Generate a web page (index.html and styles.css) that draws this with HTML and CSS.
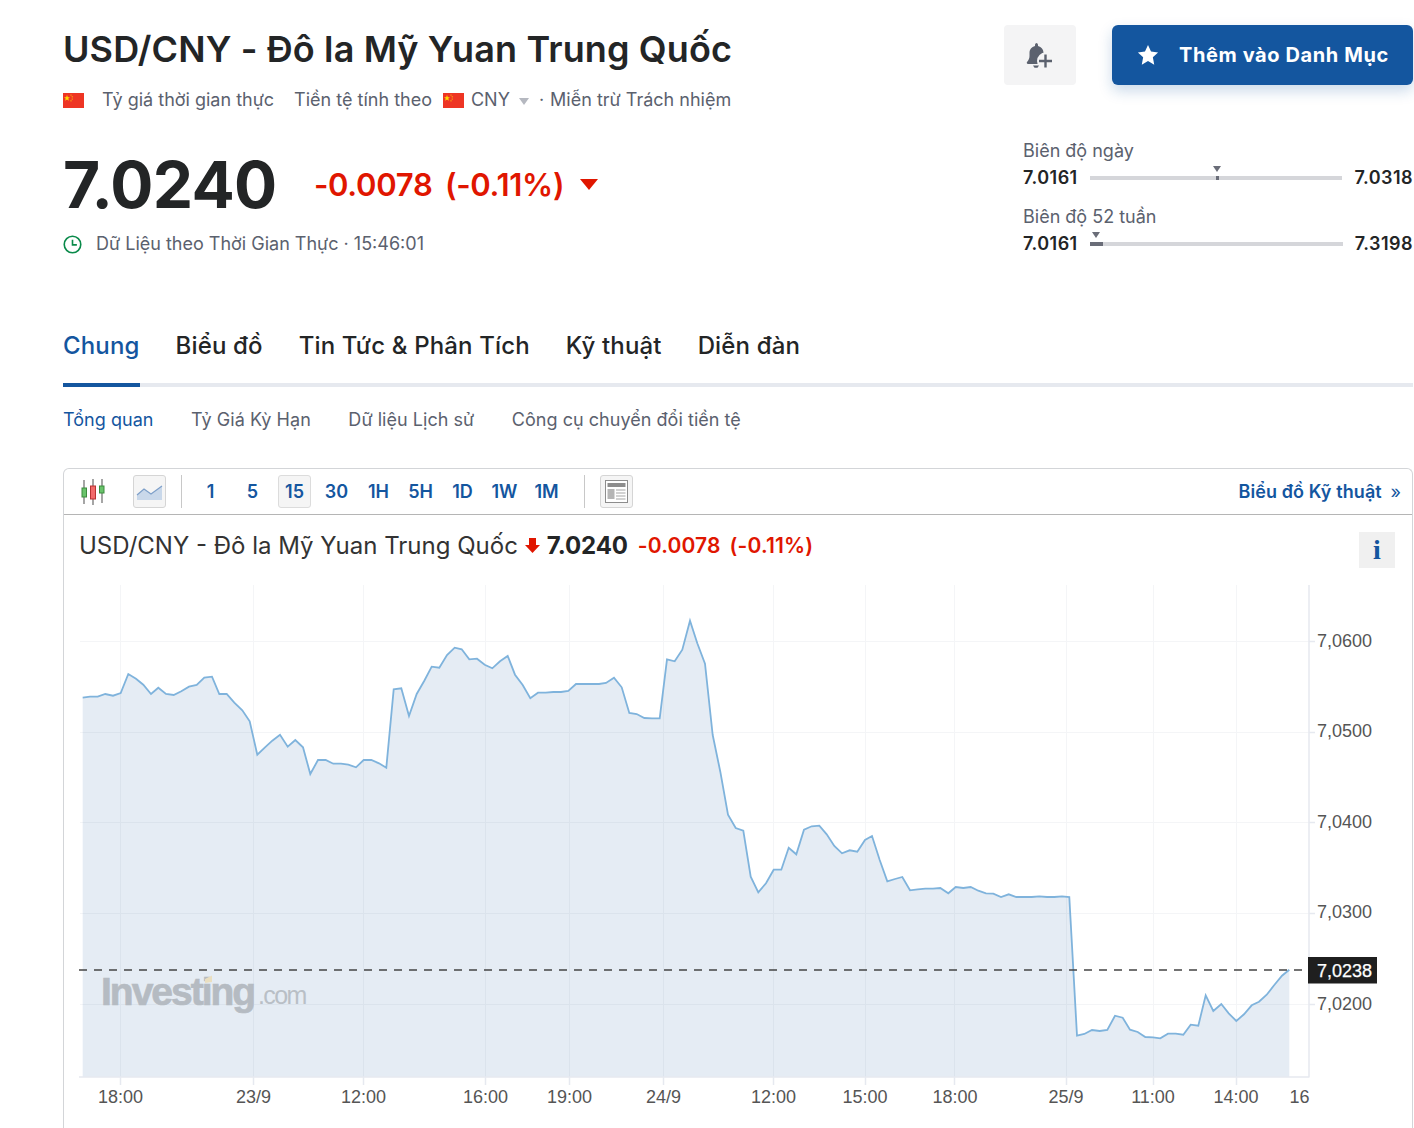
FILE: index.html
```html
<!DOCTYPE html>
<html lang="vi">
<head>
    <meta charset="UTF-8">
    <title>USD/CNY - Đô la Mỹ Yuan Trung Quốc</title>
    <link rel="stylesheet" href="styles.css">
</head>
<body>
<div class="page">
    <header class="top">
        <div class="summary">
            <h1 class="title">USD/CNY - Đô la Mỹ Yuan Trung Quốc</h1>
            <div class="meta">
                <svg class="flag" viewBox="0 0 21 15"><rect width="21" height="15" fill="#ee3524"/><polygon points="4,2 4.8,4.2 7,4.3 5.3,5.6 5.9,7.8 4,6.5 2.1,7.8 2.7,5.6 1,4.3 3.2,4.2" fill="#ffde00"/><circle cx="8" cy="2" r=".6" fill="#ffde00"/><circle cx="9.2" cy="3.8" r=".6" fill="#ffde00"/><circle cx="9.2" cy="6" r=".6" fill="#ffde00"/><circle cx="8" cy="7.8" r=".6" fill="#ffde00"/></svg>
                <span class="meta-rt">Tỷ giá thời gian thực</span>
                <span class="meta-cur">Tiền tệ tính theo</span>
                <svg class="flag flag-cny" viewBox="0 0 21 15"><rect width="21" height="15" fill="#ee3524"/><polygon points="4,2 4.8,4.2 7,4.3 5.3,5.6 5.9,7.8 4,6.5 2.1,7.8 2.7,5.6 1,4.3 3.2,4.2" fill="#ffde00"/><circle cx="8" cy="2" r=".6" fill="#ffde00"/><circle cx="9.2" cy="3.8" r=".6" fill="#ffde00"/><circle cx="9.2" cy="6" r=".6" fill="#ffde00"/><circle cx="8" cy="7.8" r=".6" fill="#ffde00"/></svg>
                <span>CNY</span>
                <span class="caret"></span>
                <span class="meta-dot">·</span>
                <span>Miễn trừ Trách nhiệm</span>
            </div>
            <div class="quote">
                <span class="last">7.0240</span>
                <span class="change">-0.0078</span>
                <span class="change change-pct">(-0.11%)</span>
                <span class="down"></span>
            </div>
            <div class="clock-row">
                <svg class="clock" viewBox="0 0 20 20"><circle cx="10" cy="10" r="8.7" fill="none" stroke="#0a8a4a" stroke-width="1.7"/><path d="M10 5v5.4h4.6" fill="none" stroke="#0a8a4a" stroke-width="1.7"/></svg>
                <span>Dữ Liệu theo Thời Gian Thực · 15:46:01</span>
            </div>
        </div>
        <div class="side">
            <div class="actions">
                <button class="bell-btn">
                    <svg width="28" height="28" viewBox="0 0 28 28"><path d="M10 2c1.200 0 2 .8 2 2v1c3.400.8 5.500 3.500 5.500 7v3c0 2.600 1 4.300 2.500 6 .6.800 0 2-1 2H2c-1 0-1.600-1.200-1-2 1.500-1.700 2.500-3.400 2.500-6v-3c0-3.500 2.100-6.200 5.500-7V4c0-1.200.8-2 2-2z" fill="#5b616e"/><circle cx="19.500" cy="20" r="8.500" fill="#f4f4f5"/><path d="M7 24.500h6l-1.500 2.200h-3z" fill="#5b616e"/><path d="M19.500 13.500v13M13 20h13" stroke="#5b616e" stroke-width="2.400" fill="none"/></svg>
                </button>
                <button class="watch-btn">
                    <svg class="star" viewBox="0 0 24 24"><polygon points="12,1 15.300,8.300 23,9.200 17.300,14.500 18.800,22.500 12,18.500 5.200,22.500 6.700,14.500 1,9.200 8.700,8.300" fill="#fff"/></svg>
                    <span>Thêm vào Danh Mục</span>
                </button>
            </div>
            <div class="ranges">
                <div class="range">
                    <div class="range-label">Biên độ ngày</div>
                    <div class="range-row">
                        <b>7.0161</b>
                        <div class="track"><i class="tick" style="left: 50.3%"></i><i class="pointer" style="left: 50.3%"></i></div>
                        <b>7.0318</b>
                    </div>
                </div>
                <div class="range">
                    <div class="range-label">Biên độ 52 tuần</div>
                    <div class="range-row">
                        <b>7.0161</b>
                        <div class="track"><i class="fill" style="width: 5.100%"></i><i class="pointer" style="left: 2.500%"></i></div>
                        <b>7.3198</b>
                    </div>
                </div>
            </div>
        </div>
    </header>

    <nav class="tabs">
        <a class="tab active">Chung</a>
        <a class="tab">Biểu đồ</a>
        <a class="tab">Tin Tức &amp; Phân Tích</a>
        <a class="tab">Kỹ thuật</a>
        <a class="tab">Diễn đàn</a>
    </nav>
    <nav class="subtabs">
        <a class="active">Tổng quan</a>
        <a>Tỷ Giá Kỳ Hạn</a>
        <a>Dữ liệu Lịch sử</a>
        <a>Công cụ chuyển đổi tiền tệ</a>
    </nav>

    <section class="card">
        <div class="toolbar">
            <svg class="candles" viewBox="0 0 25 26">
                <path d="M3 1v24M12 0v26M21 0v24" stroke="#6b6b6b" stroke-width="1.200"/>
                <rect x="1" y="9" width="4.500" height="9" fill="#69c36b" stroke="#3c8b3e"/>
                <rect x="9.500" y="7" width="5" height="13" fill="#f26a6a" stroke="#b83232"/>
                <rect x="18.500" y="7" width="4.500" height="7" fill="#69c36b" stroke="#3c8b3e"/>
            </svg>
            <button class="tool-box area-box">
                <svg width="27" height="20" viewBox="0 0 27 20"><path d="M1 13l7-6 7 5 11-8v14H1z" fill="#c9d8ea"/><path d="M1 13l7-6 7 5 11-8" fill="none" stroke="#7d9fc9" stroke-width="1.200"/></svg>
            </button>
            <span class="sep sep-first"></span>
            <div class="periods">
                <a>1</a><a>5</a><a class="on">15</a><a>30</a><a>1H</a><a>5H</a><a>1D</a><a>1W</a><a>1M</a>
            </div>
            <span class="sep sep-second"></span>
            <button class="tool-box">
                <svg width="23" height="23" viewBox="0 0 23 23"><rect x=".5" y=".5" width="22" height="22" fill="#fff" stroke="#8d8d8d"/><rect x="2.500" y="3" width="18" height="4" fill="#8d8d8d"/><rect x="2.500" y="9" width="7" height="10" fill="#b5b5b5"/><path d="M11 10h9.500M11 13h9.500M11 16h9.500M11 19h9.500" stroke="#a5a5a5" stroke-width="1.200"/></svg>
            </button>
            <a class="tech-link">Biểu đồ Kỹ thuật <span class="chev">»</span></a>
        </div>
        <div class="chart-head">
            <span class="chart-name">USD/CNY - Đô la Mỹ Yuan Trung Quốc</span>
            <svg class="chart-arrow" viewBox="0 0 15 15"><path d="M4 0h7v7h4l-7.500 8L0 7h4z" fill="#e01600"/></svg>
            <span class="chart-last">7.0240</span>
            <span class="chart-change">-0.0078</span>
            <span class="chart-change chart-pct">(-0.11%)</span>
            <span class="info">i</span>
        </div>
        <svg class="chart" viewBox="64 580 1348 548" width="1348" height="548">
            <g class="grid">
                <path d="M80 641.500H1309M80 732.500H1309M80 822.500H1309M80 913.500H1309M80 1004.500H1309"/>
                <path d="M120.500 585V1077M253.500 585V1077M363.500 585V1077M485.500 585V1077M569.500 585V1077M663.500 585V1077M773.500 585V1077M865.500 585V1077M954.500 585V1077M1066.500 585V1077M1153.500 585V1077M1236.500 585V1077"/>
            </g>
            <polygon class="area" points="82.700,1077 82.700,697.700 90,696.700 97.700,696.700 105.300,694 113,695.700 120.700,693 128.300,674 136,678.700 143.300,684.700 151,694 158.300,687.700 166,694 173.700,695 181.300,691.300 189,686.700 196.700,685 204.300,677.700 212,676.700 219.300,694 226.700,694 234.300,702.700 242.300,710.300 249.700,721.300 257.300,754.700 265,747.300 272.300,740.700 280,734.700 287.700,746.700 295.300,740 303,747.300 310.300,774 318,760 325.700,760 333.300,763.700 341,763.700 348.300,764.700 356,767.300 363.700,760 371.300,760 379,763.300 386.300,767.700 393.700,689.300 401.300,688.300 409,716 416.700,694 424.300,680.700 431.700,666.700 439.300,667.700 447,655 454.700,647.700 461.700,649.300 469.300,659.300 477,658.700 484.700,664.700 492.300,668.300 500,661.300 507.700,656 515,674.700 522.700,685 530.300,698.300 538,692.700 545.700,692.700 553.300,692 561,692 568.300,691 576,684 583.700,684 591.300,684 599,684 606,683 614,677.700 621.700,687.300 629.300,713 636.700,714 644.300,718 652,718.300 659.700,718.300 667,659.300 674.700,661.300 682.300,649.700 690,620.700 697.300,643.300 705,663.700 712.700,735 720.300,771.700 728,814.700 735.700,828 743.300,830.700 750.700,876.700 758.300,892.300 766,883.300 773.700,869.700 781.300,869.700 788.700,847.700 796.300,854.300 804,829.700 811.700,826.300 819.300,825.700 826.700,834.300 834.300,846 842,853.300 849.700,850.300 857.300,851.700 865,840 872,836 879.700,860 887.300,881.300 895,879 902.300,877 910,890.300 917.700,889.300 925.300,888.700 933,888.700 940.300,888 948.300,893.300 955.700,887 963.300,888 970.700,887 978.300,890.700 986,893.300 993.300,893.700 1001,897 1008.700,894.300 1016.300,897 1024,897 1031.700,897 1039.300,896.300 1047,897 1054.300,897 1062,896.300 1069.300,897 1077,1035.700 1084.300,1034 1092,1030 1099.700,1031 1107.300,1030 1115,1015.700 1122.700,1017.700 1130,1029.700 1137.700,1032 1145.300,1037 1153,1037.300 1160.300,1038.300 1168,1033.700 1175.700,1033.700 1183.300,1034.700 1190.700,1024.700 1198.300,1025.700 1205.700,995.300 1213.300,1011 1221.300,1004 1228.700,1013.300 1236.300,1021 1244,1014.300 1251.700,1005.300 1259,1001.700 1266.700,994.700 1274.300,985 1282,975.700 1289.300,969.700 1289.300,1077"/>
            <polyline class="line" points="82.700,697.700 90,696.700 97.700,696.700 105.300,694 113,695.700 120.700,693 128.300,674 136,678.700 143.300,684.700 151,694 158.300,687.700 166,694 173.700,695 181.300,691.300 189,686.700 196.700,685 204.300,677.700 212,676.700 219.300,694 226.700,694 234.300,702.700 242.300,710.300 249.700,721.300 257.300,754.700 265,747.300 272.300,740.700 280,734.700 287.700,746.700 295.300,740 303,747.300 310.300,774 318,760 325.700,760 333.300,763.700 341,763.700 348.300,764.700 356,767.300 363.700,760 371.300,760 379,763.300 386.300,767.700 393.700,689.300 401.300,688.300 409,716 416.700,694 424.300,680.700 431.700,666.700 439.300,667.700 447,655 454.700,647.700 461.700,649.300 469.300,659.300 477,658.700 484.700,664.700 492.300,668.300 500,661.300 507.700,656 515,674.700 522.700,685 530.300,698.300 538,692.700 545.700,692.700 553.300,692 561,692 568.300,691 576,684 583.700,684 591.300,684 599,684 606,683 614,677.700 621.700,687.300 629.300,713 636.700,714 644.300,718 652,718.300 659.700,718.300 667,659.300 674.700,661.300 682.300,649.700 690,620.700 697.300,643.300 705,663.700 712.700,735 720.300,771.700 728,814.700 735.700,828 743.300,830.700 750.700,876.700 758.300,892.300 766,883.300 773.700,869.700 781.300,869.700 788.700,847.700 796.300,854.300 804,829.700 811.700,826.300 819.300,825.700 826.700,834.300 834.300,846 842,853.300 849.700,850.300 857.300,851.700 865,840 872,836 879.700,860 887.300,881.300 895,879 902.300,877 910,890.300 917.700,889.300 925.300,888.700 933,888.700 940.300,888 948.300,893.300 955.700,887 963.300,888 970.700,887 978.300,890.700 986,893.300 993.300,893.700 1001,897 1008.700,894.300 1016.300,897 1024,897 1031.700,897 1039.300,896.300 1047,897 1054.300,897 1062,896.300 1069.300,897 1077,1035.700 1084.300,1034 1092,1030 1099.700,1031 1107.300,1030 1115,1015.700 1122.700,1017.700 1130,1029.700 1137.700,1032 1145.300,1037 1153,1037.300 1160.300,1038.300 1168,1033.700 1175.700,1033.700 1183.300,1034.700 1190.700,1024.700 1198.300,1025.700 1205.700,995.300 1213.300,1011 1221.300,1004 1228.700,1013.300 1236.300,1021 1244,1014.300 1251.700,1005.300 1259,1001.700 1266.700,994.700 1274.300,985 1282,975.700 1289.300,969.700"/>
            <path class="axis" d="M1309 585V1077.500M79 1077H1309"/>
            <path class="axis" d="M1309 641.500h6M1309 732.500h6M1309 822.500h6M1309 913.500h6M1309 1004.500h6M120.500 1077v8M253.500 1077v8M363.500 1077v8M485.500 1077v8M569.500 1077v8M663.500 1077v8M773.500 1077v8M865.500 1077v8M954.500 1077v8M1066.500 1077v8M1153.500 1077v8M1236.500 1077v8"/>
            <text class="logo" x="101" y="1005">Investing</text>
            <polygon class="logo-dot" points="205,979 212,975.500 212,982 205,983"/>
            <text class="logo-com" x="258" y="1004">.com</text>
            <line class="last-line" x1="79" y1="970" x2="1309" y2="970"/>
            <rect class="last-box" x="1308" y="957" width="69" height="26.500"/>
            <text class="last-text" x="1317" y="977">7,0238</text>
            <g class="ylabels">
                <text x="1317" y="647">7,0600</text>
                <text x="1317" y="737">7,0500</text>
                <text x="1317" y="828">7,0400</text>
                <text x="1317" y="918">7,0300</text>
                <text x="1317" y="1010">7,0200</text>
            </g>
            <g class="xlabels">
                <text x="120.500" y="1103">18:00</text>
                <text x="253.500" y="1103">23/9</text>
                <text x="363.500" y="1103">12:00</text>
                <text x="485.500" y="1103">16:00</text>
                <text x="569.500" y="1103">19:00</text>
                <text x="663.500" y="1103">24/9</text>
                <text x="773.500" y="1103">12:00</text>
                <text x="865" y="1103">15:00</text>
                <text x="955" y="1103">18:00</text>
                <text x="1066" y="1103">25/9</text>
                <text x="1153" y="1103">11:00</text>
                <text x="1236" y="1103">14:00</text>
                <text x="1299.500" y="1103">16</text>
            </g>
        </svg>
    </section>
</div>
</body>
</html>
```

FILE: styles.css
```css
* {
    box-sizing: border-box;
}
html, body {
    margin: 0;
    padding: 0;
    background: #fff;
}
body {
    font-family: Inter, 'Liberation Sans', sans-serif;
    color: #232526;
    overflow: hidden;
}
.page {
    width: 1414px;
    height: 1128px;
    padding: 0 1px 0 63px;
    overflow: hidden;
}
.top {
    display: flex;
    justify-content: space-between;
    height: 256px;
}
.summary {
    padding-top: 25px;
}
.title {
    margin: 0;
    font-size: 36px;
    line-height: 48px;
    font-weight: 600;
    letter-spacing: 0.12px;
    white-space: nowrap;
}
.meta {
    display: flex;
    align-items: center;
    margin-top: 15px;
    font-size: 18px;
    line-height: 24px;
    color: #5b616e;
}
.flag {
    width: 21px;
    height: 15px;
}
.meta-rt {
    margin-left: 18px;
}
.meta-cur {
    margin-left: 20px;
}
.flag-cny {
    margin-left: 11px;
    margin-right: 7px;
}
.caret {
    width: 0;
    height: 0;
    margin: 2px 0 0 9px;
    border: 5.5px solid transparent;
    border-top: 7px solid #b5b8c0;
    border-bottom: 0;
}
.meta-dot {
    margin: 0 6px 0 10px;
}
.quote {
    display: flex;
    align-items: center;
    margin-top: 36px;
    height: 72px;
}
.last {
    margin-top: 2px;
    font-size: 64px;
    line-height: 72px;
    font-weight: 700;
    letter-spacing: -0.7px;
}
.change {
    margin-left: 37.5px;
    font-size: 31px;
    font-weight: 600;
    letter-spacing: -0.3px;
    color: #e01600;
}
.change-pct {
    margin-left: 12.5px;
}
.down {
    width: 0;
    height: 0;
    margin: 0 0 0 16px;
    border: 9px solid transparent;
    border-top: 11px solid #e01600;
    border-bottom: 0;
}
.clock-row {
    display: flex;
    align-items: center;
    gap: 14px;
    margin-top: 12px;
    font-size: 18px;
    line-height: 24px;
    color: #5b616e;
}
.clock {
    width: 19px;
    height: 19px;
}
.side {
    width: 409px;
    padding-top: 25px;
}
.actions {
    display: flex;
    gap: 36px;
}
.bell-btn {
    display: flex;
    align-items: center;
    justify-content: center;
    width: 72px;
    height: 60px;
    padding: 0;
    border: none;
    border-radius: 4px;
    background: #f4f4f5;
}
.watch-btn {
    display: flex;
    align-items: center;
    gap: 20px;
    width: 301px;
    height: 60px;
    padding: 0 0 0 25px;
    border: none;
    border-radius: 6px;
    background: #14569f;
    box-shadow: 0 6px 14px rgba(20, 86, 159, 0.22);
    color: #fff;
    font-family: inherit;
    font-size: 20px;
    font-weight: 700;
    letter-spacing: 0.6px;
}
.star {
    width: 22px;
    height: 22px;
}
.ranges {
    display: flex;
    flex-direction: column;
    gap: 15px;
    margin-top: 54px;
    padding-left: 19px;
}
.range-label {
    font-size: 18px;
    line-height: 24px;
    color: #5b616e;
}
.range-row {
    display: flex;
    align-items: center;
    gap: 12px;
    margin-top: 3px;
    font-size: 18px;
    line-height: 24px;
}
.range-row b {
    font-weight: 600;
    letter-spacing: 0.45px;
}
.track {
    position: relative;
    flex: 1;
    height: 4px;
    background: #d5d6da;
}
.track .tick {
    position: absolute;
    top: 0;
    width: 3px;
    height: 4px;
    margin-left: -1px;
    background: #6a6d78;
}
.track .fill {
    position: absolute;
    top: 0;
    left: 0;
    height: 4px;
    background: #6a6d78;
}
.track .pointer {
    position: absolute;
    top: -10px;
    width: 0;
    height: 0;
    margin-left: -4px;
    border: 4.5px solid transparent;
    border-top: 6px solid #6a6d78;
    border-bottom: 0;
}
.tabs {
    display: flex;
    gap: 36px;
    height: 57px;
    margin-top: 74px;
    border-bottom: 4px solid #e6e9ef;
    letter-spacing: 0.15px;
}
.tab {
    height: 57px;
    font-size: 24px;
    line-height: 32px;
    font-weight: 500;
    color: #232526;
}
.tab.active {
    color: #14569f;
    border-bottom: 4px solid #14569f;
}
.subtabs {
    display: flex;
    gap: 37.5px;
    margin-top: 21px;
    font-size: 18px;
    line-height: 24px;
    letter-spacing: 0.04px;
    color: #5b616e;
}
.subtabs .active {
    color: #14569f;
}
.card {
    margin-top: 36px;
    border: 1px solid #d3d5d8;
    border-bottom: none;
    border-radius: 6px 6px 0 0;
}
.toolbar {
    display: flex;
    align-items: center;
    height: 46px;
    padding-left: 17px;
    border-bottom: 1px solid #b5b5b5;
}
.candles {
    width: 25px;
    height: 26px;
}
.tool-box {
    display: flex;
    align-items: center;
    justify-content: center;
    width: 33px;
    height: 33px;
    padding: 0;
    border: 1px solid #d5d5d5;
    border-radius: 3px;
    background: #f5f5f5;
}
.area-box {
    margin-left: 27px;
}
.sep {
    width: 1px;
    height: 33px;
    background: #c8c8c8;
}
.sep-first {
    margin: 0 12px 0 15px;
}
.sep-second {
    margin: 0 15px 0 21px;
}
.periods {
    display: flex;
    gap: 9px;
    font-size: 18px;
    font-weight: 600;
    color: #14569f;
}
.periods a {
    width: 33px;
    height: 33px;
    line-height: 31px;
    border: 1px solid transparent;
    border-radius: 3px;
    text-align: center;
    white-space: nowrap;
}
.periods .on {
    border-color: #dcdcdc;
    background: #f5f5f5;
}
.tech-link {
    margin-left: auto;
    padding-right: 11px;
    font-size: 18px;
    font-weight: 600;
    letter-spacing: 0.1px;
    color: #14569f;
}
.chev {
    margin-left: 4px;
    font-weight: 400;
}
.chart-head {
    position: relative;
    display: flex;
    align-items: center;
    height: 65px;
    padding: 0 0 5px 15px;
}
.chart-name {
    font-size: 24px;
    color: #333;
}
.chart-arrow {
    width: 15px;
    height: 15px;
    margin: 0 7px;
}
.chart-last {
    font-size: 24px;
    font-weight: 700;
    letter-spacing: -0.1px;
}
.chart-change {
    margin-left: 10px;
    font-size: 21px;
    font-weight: 600;
    letter-spacing: 0.15px;
    color: #e01600;
}
.chart-pct {
    margin-left: 9px;
}
.info {
    position: absolute;
    top: 17px;
    right: 17px;
    width: 36px;
    height: 36px;
    background: #f0f0f0;
    color: #14569f;
    font-family: 'Liberation Serif', serif;
    font-size: 28px;
    font-weight: 700;
    line-height: 36px;
    text-align: center;
}
.chart {
    display: block;
}
.grid path {
    fill: none;
    stroke: #f4f5f7;
    stroke-width: 1;
}
.area {
    fill: rgba(20, 86, 159, 0.11);
}
.line {
    fill: none;
    stroke: #7fb3dc;
    stroke-width: 1.8;
}
.axis {
    fill: none;
    stroke: #e6e9f0;
    stroke-width: 1.5;
}
.logo {
    font-family: 'Liberation Sans', sans-serif;
    font-size: 39px;
    font-weight: 700;
    letter-spacing: -2px;
    fill: #b5bbc2;
    stroke: #b5bbc2;
    stroke-width: 0.7;
}
.logo-dot {
    fill: #eadfc0;
}
.logo-com {
    font-family: 'Liberation Sans', sans-serif;
    font-size: 25px;
    letter-spacing: -1.6px;
    fill: #b9bfc6;
}
.last-line {
    stroke: #444;
    stroke-width: 1.4;
    stroke-dasharray: 8 7;
}
.last-box {
    fill: #1f1f1f;
}
.last-text {
    font-family: 'Liberation Sans', sans-serif;
    font-size: 18px;
    fill: #fff;
    stroke: #fff;
    stroke-width: 0.25;
}
.ylabels text,
.xlabels text {
    font-family: 'Liberation Sans', sans-serif;
    font-size: 18px;
    fill: #555;
}
.xlabels text {
    text-anchor: middle;
}
```
